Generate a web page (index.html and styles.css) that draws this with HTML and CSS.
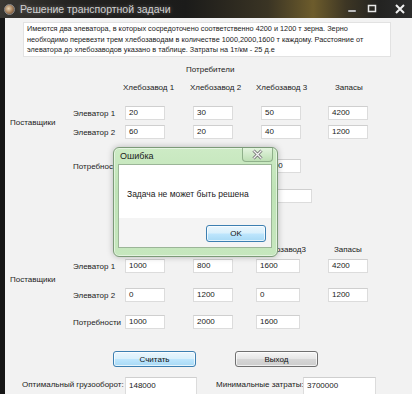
FILE: index.html
```html
<!DOCTYPE html>
<html lang="ru">
<head>
<meta charset="utf-8">
<title>Решение транспортной задачи</title>
<link rel="stylesheet" href="styles.css">
</head>
<body>
<div class="titlebar">
  <span class="app-icon"></span>
  <span class="title">Решение транспортной задачи</span>
  <div class="winbtns">
    <svg class="wb" width="14" height="12" viewBox="0 0 14 12"><rect x="3" y="7" width="8" height="2" fill="#e8e8e8" stroke="#333" stroke-width="0.5"/></svg>
    <svg class="wb" width="14" height="12" viewBox="0 0 14 12"><rect x="3.5" y="2.5" width="7" height="6" fill="none" stroke="#e8e8e8" stroke-width="1.5"/></svg>
    <svg class="wb close" width="14" height="12" viewBox="0 0 14 12"><path d="M3 2 L11 10 M11 2 L3 10" stroke="#f0f0f0" stroke-width="2"/></svg>
  </div>
</div>
<div class="client">
  <div class="desc">Имеются два элеватора, в которых сосредоточено соответственно 4200 и 1200 т зерна. Зерно<br>необходимо перевезти трем хлебозаводам в количестве 1000,2000,1600 т каждому. Расстояние от<br>элеватора до хлебозаводов указано в таблице. Затраты на 1т/км - 25 д.е</div>

  <div class="grid t1">
    <div class="consumers">Потребители</div>
    <div class="hdr h1">Хлебозавод 1</div>
    <div class="hdr h2">Хлебозавод 2</div>
    <div class="hdr h3">Хлебозавод 3</div>
    <div class="hdr h4">Запасы</div>

    <div class="suppliers">Поставщики</div>

    <div class="row ra">
      <div class="rlabel">Элеватор 1</div>
      <div class="field">20</div><div class="field">30</div><div class="field">50</div><div class="field">4200</div>
    </div>
    <div class="row rb">
      <div class="rlabel">Элеватор 2</div>
      <div class="field">60</div><div class="field">20</div><div class="field">40</div><div class="field">1200</div>
    </div>
    <div class="row rc">
      <div class="rlabel">Потребности</div>
      <div class="field">1000</div><div class="field">2000</div><div class="field">1600</div>
    </div>
    <div class="row rd">
      <div class="field extra"></div>
    </div>
  </div>

  <div class="grid t2">
    <div class="hdr h1">Хлебозавод1</div>
    <div class="hdr h2">Хлебозавод2</div>
    <div class="hdr h3b">Хлебозавод3</div>
    <div class="hdr h4b">Запасы</div>

    <div class="suppliers s2">Поставщики</div>

    <div class="row r2a">
      <div class="rlabel">Элеватор 1</div>
      <div class="field">1000</div><div class="field">800</div><div class="field wide">1600</div><div class="field">4200</div>
    </div>
    <div class="row r2b">
      <div class="rlabel">Элеватор 2</div>
      <div class="field">0</div><div class="field">1200</div><div class="field wide">0</div><div class="field">1200</div>
    </div>
    <div class="row r2c">
      <div class="rlabel">Потребности</div>
      <div class="field">1000</div><div class="field">2000</div><div class="field wide">1600</div>
    </div>
  </div>

  <div class="buttons">
    <button class="btn default">Считать</button>
    <button class="btn">Выход</button>
  </div>

  <div class="results">
    <span class="rl1">Оптимальный грузооборот:</span>
    <div class="field r1">148000</div>
    <span class="rl2">Минимальные затраты:</span>
    <div class="field r2">3700000</div>
  </div>

  <div class="dialog">
    <div class="dlg-title">
      <span>Ошибка</span>
      <span class="dlg-close"><svg width="13" height="11" viewBox="0 0 13 11"><path d="M2.5 1.5 L10.5 9.5 M10.5 1.5 L2.5 9.5" stroke="#6a6a6a" stroke-width="3"/><path d="M2.5 1.5 L10.5 9.5 M10.5 1.5 L2.5 9.5" stroke="#f4f4f4" stroke-width="1.4"/></svg></span>
    </div>
    <div class="dlg-body">
      <div class="dlg-msg">Задача не может быть решена</div>
      <div class="dlg-foot"><button class="btn default ok">OK</button></div>
    </div>
  </div>
</div>
</body>
</html>
```

FILE: styles.css
```css
* { box-sizing: border-box; }
html, body { margin: 0; padding: 0; }
body {
  width: 412px;
  height: 394px;
  overflow: hidden;
  background: #161616;
  font-family: "Liberation Sans", Arial, sans-serif;
  font-size: 8px;
  color: #222;
}

.titlebar {
  height: 18px;
  display: flex;
  align-items: center;
  background: linear-gradient(90deg, #3a3833 0%, #232220 18%, #1b1b1a 45%, #3a3424 65%, #6d5c2c 76%, #3d3624 84%, #232321 92%, #2c2c2c 100%);
}
.app-icon {
  width: 11px;
  height: 11px;
  margin-left: 4px;
  border-radius: 50%;
  background: radial-gradient(circle at 40% 40%, #e6d2b0 0%, #a07a55 55%, #5a4030 100%);
  border: 1px solid #8a8a8a;
}
.title {
  margin-left: 5px;
  color: #d0d0d0;
  font-size: 10.5px;
  text-shadow: 0 0 4px rgba(255,255,255,0.35);
  white-space: nowrap;
}
.winbtns {
  margin-left: auto;
  display: flex;
  align-items: center;
  gap: 6px;
  padding-right: 5px;
}
.wb { display: block; }
.wb.close { margin-left: 8px; }

.client {
  position: relative;
  margin-left: 5px;
  height: 376px;
  background: #f2f2f2;
  overflow: hidden;
}

.desc {
  margin: 4px 0 0 18px;
  width: 368px;
  height: 35px;
  background: #fff;
  border: 1px solid #e2e2e2;
  padding: 1px 3px;
  font-size: 7.3px;
  line-height: 10.5px;
  white-space: nowrap;
  color: #1a1a1a;
}

.grid {
  display: grid;
  padding-left: 5px;
  grid-template-columns: 63px 52px 68px 68px 67px 40px;
}
.t1 {
  margin-top: 6px;
  grid-template-rows: 14px 29px 19px 34px 30px 14px;
}
.t2 {
  margin-top: 41px;
  grid-template-rows: 15px 29px 27px 14px;
}

.row {
  grid-column: 2 / -1;
  display: grid;
  grid-template-columns: subgrid;
  align-items: start;
}
.ra { grid-row: 3; }
.rb { grid-row: 4; }
.rc { grid-row: 5; }
.rd { grid-row: 6; }
.r2a { grid-row: 2; }
.r2b { grid-row: 3; }
.r2c { grid-row: 4; }

.consumers {
  grid-column: 4 / span 2;
  grid-row: 1;
  margin-left: -7px;
  line-height: 14px;
  white-space: nowrap;
}
.hdr {
  white-space: nowrap;
  line-height: 12px;
  align-self: start;
}
.t1 .hdr { margin-top: 5px; grid-row: 2; }
.t2 .hdr { margin-top: 0; grid-row: 1; }
.h1 { grid-column: 3; margin-left: -2px; }
.h2 { grid-column: 4; margin-left: -3px; }
.h3 { grid-column: 5; margin-left: -5px; }
.h4 { grid-column: 6; margin-left: 7px; }
.h3b { grid-column: 5; margin-left: -4px; }
.h4b { grid-column: 6; margin-left: 6px; }

.suppliers {
  grid-column: 1;
  grid-row: 3 / span 2;
  align-self: start;
  margin-top: 11px;
  line-height: 12px;
  white-space: nowrap;
}
.suppliers.s2 {
  grid-row: 2 / span 2;
  margin-top: 15px;
}
.rlabel {
  line-height: 14px;
  height: 14px;
  white-space: nowrap;
  margin-top: 1px;
}

.field {
  width: 40px;
  height: 14px;
  background: #fff;
  border: 1px solid #dcdcdc;
  border-top-color: #cfcfcf;
  padding-left: 3px;
  line-height: 12px;
  color: #1a1a1a;
  white-space: nowrap;
  overflow: hidden;
}
.field.wide {
  width: 44px;
  margin-left: -5px;
}
.field.extra {
  grid-column: 3 / span 2;
  width: 62px;
  margin-left: 57px;
}

.buttons {
  display: flex;
  gap: 39px;
  padding-left: 108px;
  margin-top: 22px;
}
.btn {
  width: 83px;
  height: 16px;
  padding: 0;
  font-family: "Liberation Sans", Arial, sans-serif;
  font-size: 8px;
  color: #111;
  border: 1px solid #707070;
  border-radius: 3px;
  background: linear-gradient(#f6f6f6 0%, #e6e6e6 48%, #d6d6d6 52%, #cdcdcd 100%);
  box-shadow: inset 0 0 0 1px rgba(255,255,255,0.7);
}
.btn.default {
  border-color: #3c7fb1;
  background: linear-gradient(#eaf6fd 0%, #d9f0fc 48%, #bee6fd 52%, #a7d9f5 100%);
}

.results {
  display: flex;
  align-items: flex-start;
  margin-top: 10px;
  padding-left: 17px;
}
.rl1 {
  width: 103px;
  line-height: 16px;
  white-space: nowrap;
}
.rl2 {
  width: 87px;
  margin-left: 19px;
  line-height: 16px;
  white-space: nowrap;
}
.field.r1 { width: 72px; height: 18px; line-height: 15px; }
.field.r2 { width: 73px; height: 18px; line-height: 15px; }

.dialog {
  position: absolute;
  left: 108px;
  top: 129px;
  width: 165px;
  height: 110px;
  border: 1px solid #7c9a78;
  border-radius: 6px;
  background: linear-gradient(#cdebc5 0%, #bfe3b6 40%, #c6e7be 100%);
  box-shadow: 0 0 6px rgba(0,0,0,0.25), inset 0 0 0 1px rgba(255,255,255,0.5);
}
.dlg-title {
  height: 16px;
  display: flex;
  align-items: center;
  padding-left: 6px;
  font-size: 9px;
  color: #1b1b1b;
}
.dlg-close {
  margin-left: auto;
  margin-right: 4px;
  align-self: flex-start;
  width: 31px;
  height: 14px;
  display: flex;
  align-items: center;
  justify-content: center;
  border: 1px solid #8fb08a;
  border-top: none;
  border-radius: 0 0 4px 4px;
  background: linear-gradient(#e3f4de, #bddfb4);
}
.dlg-close svg { display: block; }
.dlg-body {
  margin: 0 5px 0 4px;
  height: 84px;
  background: #fff;
  border: 1px solid #9bb597;
  display: flex;
  flex-direction: column;
}
.dlg-msg {
  height: 53px;
  padding-left: 8px;
  padding-top: 23px;
  font-size: 8.5px;
  line-height: 12px;
  white-space: nowrap;
  color: #1a1a1a;
}
.dlg-foot {
  flex: 1;
  background: #f4f4f4;
  display: flex;
  justify-content: flex-end;
  align-items: flex-start;
  padding: 7px 5px 0 0;
}
.btn.ok {
  width: 60px;
  height: 17px;
}
```
